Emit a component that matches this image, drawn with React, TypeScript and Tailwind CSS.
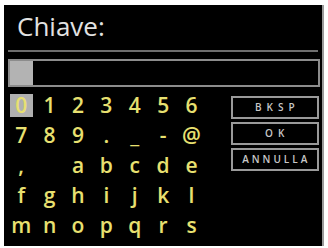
import React from 'react';

const rows: string[][] = [
  ['0', '1', '2', '3', '4', '5', '6'],
  ['7', '8', '9', '.', '_', '-', '@'],
  [',', ' ', 'a', 'b', 'c', 'd', 'e'],
  ['f', 'g', 'h', 'i', 'j', 'k', 'l'],
  ['m', 'n', 'o', 'p', 'q', 'r', 's'],
];

const buttons = ['BKSP', 'OK', 'ANNULLA'];

export default function App() {
  return (
    <div className="w-[328px] h-[248px] bg-white pt-[5px] pl-[4px]" style={{ fontFamily: '"Open Sans", sans-serif' }}>
      <div className="w-[320px] h-[241px] bg-black border-r-2 border-[#9a9a9a] flex flex-col">
        <div className="h-[40px] pl-[13px] pt-[6px] text-[26px] leading-[31px] text-[#e2e2e2]">Chiave:</div>
        <div className="mx-[4px] mt-[5px] h-[2px] w-[310px] bg-[#6e6e6e]" />
        <div className="ml-[4px] mt-[7px] w-[312px] h-[28px] border-2 border-[#8c8c8c] flex">
          <div className="w-[23px] h-full bg-[#b3b3b3]" />
        </div>
        <div className="flex mt-[4px]">
          <div className="grid grid-cols-[repeat(7,28.4px)] grid-rows-[repeat(5,29.8px)] pl-[3px]">
            {rows.flat().map((ch, i) => (
              <div key={i} className="flex items-center justify-center">
                <span
                  className={`w-[23px] h-[23px] flex items-center justify-center text-[21px] font-semibold leading-none text-[#e8e070] ${
                    i === 0 ? 'bg-[#b0b0b0]' : ''
                  }`}
                >
                  {ch}
                </span>
              </div>
            ))}
          </div>
          <div className="ml-[25px] mt-[5px] flex flex-col gap-[3px]">
            {buttons.map((b) => (
              <div
                key={b}
                className={`w-[88px] h-[23px] border-2 border-[#9a9a9a] flex items-center justify-center text-[10px] font-semibold text-[#c8c8c8] ${
                  b === 'ANNULLA' ? 'tracking-[3px] pl-[3px]' : 'tracking-[5px] pl-[5px]'
                }`}
              >
                {b}
              </div>
            ))}
          </div>
        </div>
      </div>
    </div>
  );
}
